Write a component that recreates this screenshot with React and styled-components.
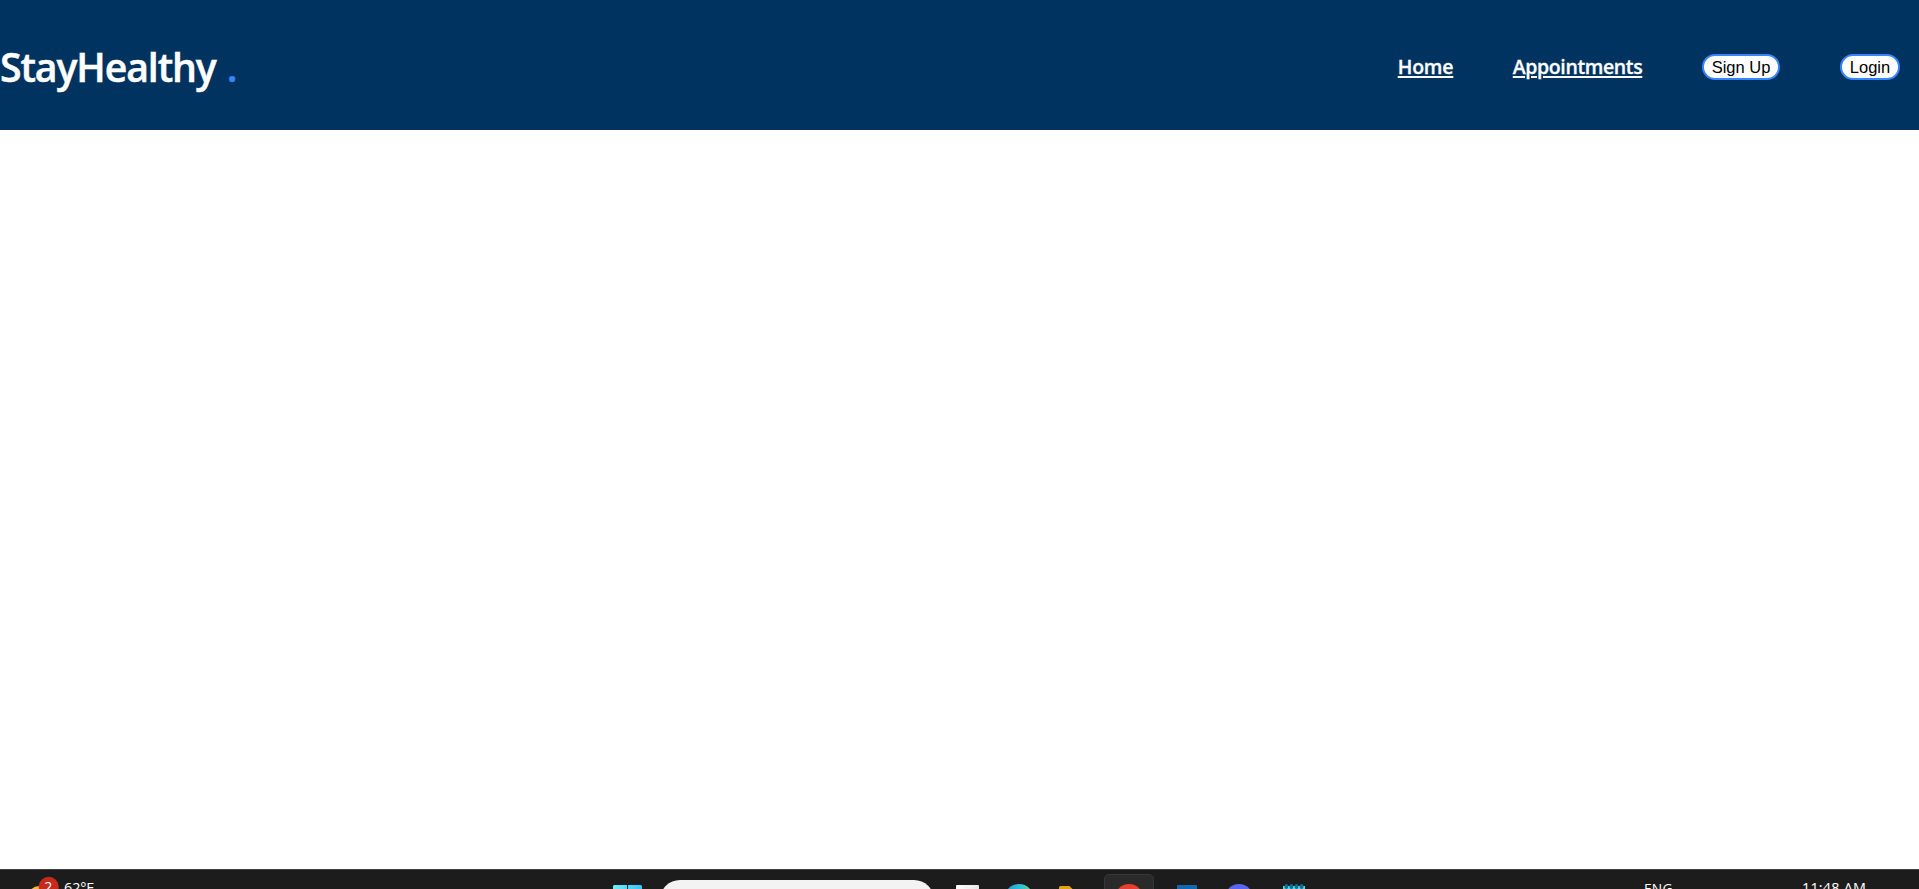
import React from "react";
import styled, { createGlobalStyle } from "styled-components";

const GlobalStyle = createGlobalStyle`
  * { box-sizing: border-box; }
  html, body { margin: 0; background: #fff; overflow: hidden; }
`;

const Screen = styled.div`
  height: 100vh;
  display: flex;
  flex-direction: column;
  overflow: hidden;
  font-family: "Open Sans", "Noto Sans", sans-serif;
`;

const Navbar = styled.nav`
  height: 130px;
  flex: none;
  display: flex;
  align-items: center;
  justify-content: space-between;
  padding-right: 19px;
  background: #003360;
  color: #fff;
`;

const Brand = styled.div`
  display: flex;
  padding-top: 3px;
  font-size: 39.2px;
  line-height: 54px;
  font-weight: 600;
  -webkit-text-stroke: 0.5px currentColor;
  letter-spacing: -1.1px;
  white-space: pre;
`;

const BrandDot = styled.span`
  color: #3685fb;
  margin-left: 11px;
`;

const NavList = styled.ul`
  display: flex;
  align-items: center;
  gap: 60px;
  height: 30px;
  margin: 4px 0 0;
  padding: 0;
  list-style: none;
`;

const NavItem = styled.li`
  display: flex;
  justify-content: center;
  width: ${(p) => p.$width}px;
`;

const NavLink = styled.a`
  color: #fff;
  font-size: 19.5px;
  line-height: 26px;
  font-weight: 600;
  -webkit-text-stroke: 0.3px currentColor;
  letter-spacing: ${(p) => p.$tracking}px;
  white-space: nowrap;
  text-decoration: underline;
  text-decoration-thickness: 2px;
  text-underline-offset: 2px;
`;

const PillButton = styled.button`
  width: 100%;
  height: 26px;
  padding: 0 0 1px;
  border: 2px solid #3685fb;
  border-radius: 13px;
  background: #fff;
  color: #000;
  font: 16.5px/20px "Liberation Sans", Arial, sans-serif;
  white-space: nowrap;
`;

const Content = styled.main`
  flex: 1;
`;

const Taskbar = styled.footer`
  height: 20px;
  flex: none;
  display: flex;
  align-items: flex-start;
  overflow: hidden;
  border-top: 1px solid #404343;
  background: #1c1c1c;
  color: #fff;
`;

const Slot = styled.div`
  flex: none;
  width: ${(p) => p.$width}px;
  height: 40px;
  margin-left: ${(p) => p.$gap}px;
  margin-top: ${(p) => p.$top}px;
  svg { display: block; }
`;

const SearchBox = styled(Slot)`
  border-radius: 20px;
  background: #f3f3f3;
`;

const ActiveTile = styled(Slot)`
  display: flex;
  justify-content: center;
  padding-top: 9px;
  border: 1px solid #373737;
  border-radius: 5px;
  background: #2a2a2a;
`;

const TaskText = styled(Slot)`
  font-size: ${(p) => p.$size}px;
  line-height: 18px;
  letter-spacing: ${(p) => p.$tracking || 0}px;
  white-space: nowrap;
`;

const WeatherIcon = () => (
  <svg width="30" height="32" viewBox="0 0 30 32">
    <circle cx="10" cy="21" r="11" fill="#f7b731" />
    <circle cx="19.7" cy="10.8" r="10" fill="#c42b1c" />
    <text x="19.2" y="16" fill="#fff" fontSize="14" textAnchor="middle">2</text>
  </svg>
);

const StartIcon = () => (
  <svg width="29" height="29" viewBox="0 0 29 29">
    <defs>
      <linearGradient id="start" x2="1">
        <stop stopColor="#72ecfb" />
        <stop offset="1" stopColor="#35c5fb" />
      </linearGradient>
    </defs>
    <path d="M1 0h13v14H0V1zM15 0h13l1 1v13H15zM0 15h14v14H0zM15 15h14v14H15z" fill="url(#start)" />
  </svg>
);

const TaskViewIcon = () => (
  <svg width="23" height="23" viewBox="0 0 23 23">
    <defs>
      <linearGradient id="view" x2="1">
        <stop stopColor="#fff" />
        <stop offset="1" stopColor="#e8e8e8" />
      </linearGradient>
    </defs>
    <rect width="23" height="23" rx="1" fill="url(#view)" />
  </svg>
);

const EdgeIcon = () => (
  <svg width="30" height="30" viewBox="0 0 30 30">
    <defs>
      <linearGradient id="edge" x2="1">
        <stop offset=".1" stopColor="#229cdc" />
        <stop offset=".55" stopColor="#2cc1d6" />
        <stop offset="1" stopColor="#62dc78" />
      </linearGradient>
    </defs>
    <circle cx="15" cy="15" r="15" fill="url(#edge)" />
  </svg>
);

const FolderIcon = () => (
  <svg width="28" height="24" viewBox="0 0 28 24">
    <path d="M0 1.5Q0 0 1.5 0h9l3 3H28v21H0z" fill="#e0a30b" />
  </svg>
);

const DiscIcon = ({ color }) => (
  <svg width="28" height="28" viewBox="0 0 28 28">
    <circle cx="14" cy="14" r="14" fill={color} />
  </svg>
);

const MailIcon = () => (
  <svg width="20" height="24" viewBox="0 0 20 24">
    <rect width="20" height="24" rx="0.5" fill="#0f69b4" />
  </svg>
);

const NotepadIcon = () => (
  <svg width="22" height="28" viewBox="0 0 22 28">
    <rect y="2" width="22" height="26" fill="#5dd2f3" />
    {[3.3, 8.4, 13.5, 18.6].map((x) => (
      <path key={x} d={`M${x - 1.8} 1.8a1.8 1.8 0 0 1 3.6 0v1.4a1.8 1.8 0 0 1-3.6 0z`} fill="#08718f" />
    ))}
  </svg>
);

export default function App() {
  return (
    <Screen>
      <GlobalStyle />
      <Navbar>
        <Brand>
          StayHealthy<BrandDot>.</BrandDot>
        </Brand>
        <NavList>
          <NavItem $width={55}><NavLink href="#" $tracking={-0.2}>Home</NavLink></NavItem>
          <NavItem $width={129}><NavLink href="#" $tracking={-0.38}>Appointments</NavLink></NavItem>
          <NavItem $width={78}><PillButton>Sign Up</PillButton></NavItem>
          <NavItem $width={60}><PillButton>Login</PillButton></NavItem>
        </NavList>
      </Navbar>
      <Content />
      <Taskbar>
        <Slot $width={30} $gap={29} $top={6}><WeatherIcon /></Slot>
        <TaskText $width={32} $gap={5} $top={9} $size={14.4} $tracking={-0.1}>62°F</TaskText>
        <Slot $width={29} $gap={517} $top={15}><StartIcon /></Slot>
        <SearchBox $width={274} $gap={18} $top={10} />
        <Slot $width={23} $gap={22} $top={15}><TaskViewIcon /></Slot>
        <Slot $width={30} $gap={25} $top={14}><EdgeIcon /></Slot>
        <Slot $width={28} $gap={25} $top={16}><FolderIcon /></Slot>
        <ActiveTile $width={50} $gap={17} $top={4}><DiscIcon color="#e83e2f" /></ActiveTile>
        <Slot $width={20} $gap={23} $top={15}><MailIcon /></Slot>
        <Slot $width={28} $gap={28} $top={14}><DiscIcon color="#5865f2" /></Slot>
        <Slot $width={22} $gap={30} $top={14}><NotepadIcon /></Slot>
        <TaskText $width={30} $gap={339} $top={10} $size={13.8} $tracking={0.2}>ENG</TaskText>
        <TaskText $width={70} $gap={128} $top={9} $size={14.4} $tracking={0.2}>11:48 AM</TaskText>
      </Taskbar>
    </Screen>
  );
}
